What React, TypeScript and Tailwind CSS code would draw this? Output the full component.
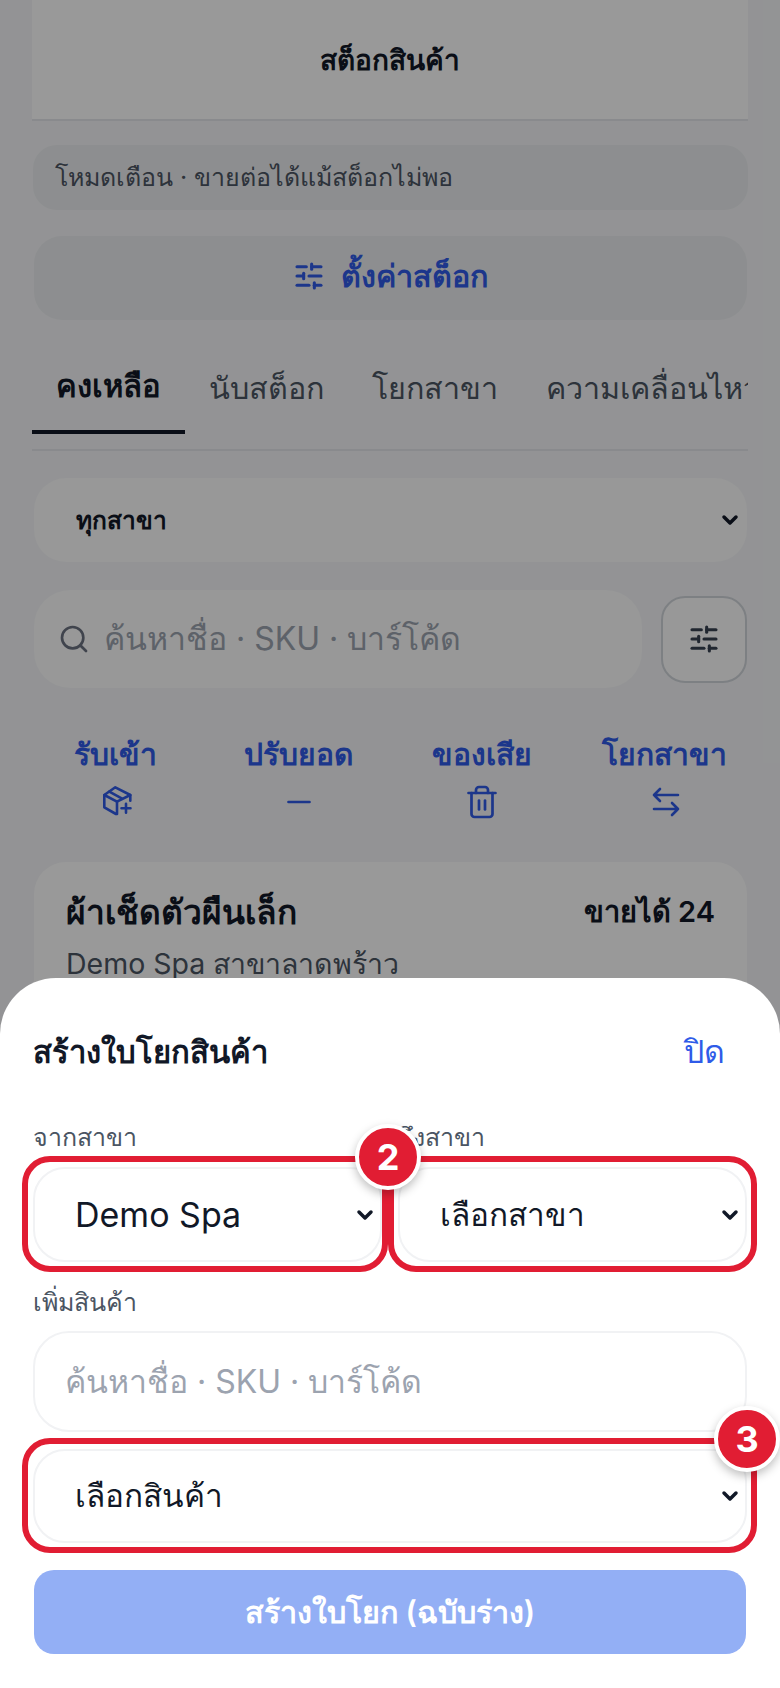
import React from 'react';
import { ChevronDown, Minus, Search, SlidersHorizontal, Trash2 } from 'lucide-react';

const TABS = ['คงเหลือ', 'นับสต็อก', 'โยกสาขา', 'ความเคลื่อนไหว'];

const BoxPlusIcon: React.FC = () => (
  <svg width="36" height="36" viewBox="0 0 36 36" fill="none" stroke="currentColor" strokeWidth="2.6" strokeLinecap="round" strokeLinejoin="round">
    <path d="M32.3 16.7V11L17.3 3.3 6.3 11v12.3L18 30" />
    <path d="M6.3 11 19 17.7 32.3 11" />
    <path d="M19 17.7V30" />
    <path d="M11.3 7.7 23.7 14.3" />
    <path d="M28 19.8v9M23.5 24.3h9" />
  </svg>
);

const SwapIcon: React.FC = () => (
  <svg width="36" height="36" viewBox="0 0 36 36" fill="none" stroke="currentColor" strokeWidth="2.6" strokeLinecap="round" strokeLinejoin="round">
    <path d="M31 11H7M13 5l-6 6 6 6" />
    <path d="M7 25h24M25 19l6 6-6 6" />
  </svg>
);

const ACTIONS = [
  { label: 'รับเข้า', icon: <BoxPlusIcon /> },
  { label: 'ปรับยอด', icon: <Minus className="w-9 h-9" strokeWidth={1.8} /> },
  { label: 'ของเสีย', icon: <Trash2 className="w-9 h-9" strokeWidth={1.8} /> },
  { label: 'โยกสาขา', icon: <SwapIcon /> },
];

const NativeSelect: React.FC<{ label: string; className?: string; textClass?: string }> = ({ label, className = '', textClass = 'text-[31.5px]' }) => (
  <div className={`relative flex items-center rounded-[32px] border-2 ${className}`}>
    <span className={`pl-[40px] ${textClass}`}>{label}</span>
    <ChevronDown className="absolute right-[3px] w-6 h-6 text-[#111827]" strokeWidth={3.5} />
  </div>
);

const Highlight: React.FC<{ className?: string }> = ({ className = '' }) => (
  <div className={`absolute rounded-[28px] border-[6px] border-[#e11d33] pointer-events-none ${className}`} />
);

const StepBadge: React.FC<{ n: number; className?: string }> = ({ n, className = '' }) => (
  <div className={`absolute w-[66px] h-[66px] rounded-full bg-[#e11d33] border-[4px] border-white shadow-[0_4px_10px_rgba(0,0,0,0.25)] flex items-center justify-center text-white text-[36px] font-bold ${className}`}>
    {n}
  </div>
);

export default function App() {
  return (
    <div className="relative w-[780px] h-[1688px] overflow-hidden bg-[#f5f6f8] text-[#111827] font-['Inter','Noto_Sans',sans-serif]">
      {/* page behind the sheet */}
      <div className="pl-[33px] pr-[32px] flex flex-col">
        <div className="-ml-px h-[121px] bg-white border-b-2 border-[#e5e7eb] flex items-center justify-center">
          <h1 className="text-[28px] font-semibold">สต็อกสินค้า</h1>
        </div>

        <div className="mt-6 h-[65px] rounded-[24px] bg-[#ebedf0] flex items-center px-[22px] text-[25px] text-[#4b5563]">
          โหมดเตือน · ขายต่อได้แม้สต็อกไม่พอ
        </div>

        <button className="mx-px mt-[26px] h-[84px] pb-1 rounded-[28px] bg-[#ebedf0] flex items-center justify-center gap-4 text-[#2f5be8] text-[30.5px] font-semibold">
          <SlidersHorizontal className="w-8 h-8" strokeWidth={2.3} />
          ตั้งค่าสต็อก
        </button>

        <div className="-ml-px mt-8 h-[99px] flex border-b-2 border-[#e5e7eb] overflow-hidden">
          {TABS.map((tab, i) => (
            <div key={tab} className={`relative h-[82px] shrink-0 px-6 pb-[10px] flex items-center whitespace-nowrap ${i === 0 ? 'text-[31px] font-semibold text-[#111827] border-b-4 border-[#111827]' : 'text-[30.5px] font-medium text-[#4b5563]'}`}>
              {tab}
            </div>
          ))}
        </div>

        <NativeSelect label="ทุกสาขา" textClass="text-[24.5px] font-semibold" className="mx-px mt-[27px] h-[84px] bg-white/75 border-transparent" />

        <div className="ml-px mt-7 flex items-center gap-[19px]">
          <div className="h-[98px] w-[608px] rounded-[36px] bg-white/75 flex items-center gap-[14px] px-6 text-[#6b7280]">
            <Search className="w-8 h-8 shrink-0" strokeWidth={2} />
            <span className="text-[32px] text-[#9ca3af]">ค้นหาชื่อ · SKU · บาร์โค้ด</span>
          </div>
          <div className="w-[86px] h-[87px] rounded-[24px] bg-white/75 border-2 border-[#d1d5db] flex items-center justify-center text-[#374151]">
            <SlidersHorizontal className="w-8 h-8" strokeWidth={2.3} />
          </div>
        </div>

        <div className="mt-[44px] -ml-[9px] -mr-[8px] grid grid-cols-4 text-[#2f5be8]">
          {ACTIONS.map((a) => (
            <div key={a.label} className="flex flex-col items-center gap-[8px]">
              <span className="text-[30px] font-semibold leading-[44px]">{a.label}</span>
              {a.icon}
            </div>
          ))}
        </div>

        <div className="mx-px mt-[42px] h-[200px] rounded-[32px] bg-white px-8 pt-[25px]">
          <div className="flex items-center justify-between">
            <span className="text-[33.5px] font-bold">ผ้าเช็ดตัวผืนเล็ก</span>
            <span className="text-[29px] font-semibold">ขายได้ 24</span>
          </div>
          <div className="mt-[6px] text-[28.5px] text-[#4b5563]">Demo Spa สาขาลาดพร้าว</div>
        </div>
      </div>

      {/* dim overlay */}
      <div className="absolute inset-0 bg-black/40" />

      {/* bottom sheet */}
      <div className="absolute left-0 right-0 bottom-0 h-[710px] rounded-t-[56px] bg-white px-[33px] pt-[50px]">
        <div className="flex items-center justify-between h-12">
          <h2 className="text-[31px] font-semibold">สร้างใบโยกสินค้า</h2>
          <button className="mr-[22px] text-[32px] font-medium text-[#2f5be8]">ปิด</button>
        </div>

        <div className="mt-[45px] grid grid-cols-2 gap-x-[16px]">
          <div>
            <div className="text-[25px] leading-8 text-[#4b5563]">จากสาขา</div>
            <NativeSelect label="Demo Spa" textClass="text-[34px]" className="mt-[14px] h-[95px] border-[#f1f2f4] bg-white" />
          </div>
          <div>
            <div className="text-[25px] leading-8 text-[#4b5563]">ถึงสาขา</div>
            <NativeSelect label="เลือกสาขา" className="mt-[14px] h-[95px] border-[#f1f2f4] bg-white" />
          </div>
        </div>

        <div className="mt-[24px] text-[25px] leading-8 text-[#4b5563]">เพิ่มสินค้า</div>
        <div className="mt-[13px] h-[101px] rounded-[36px] border-2 border-[#f1f2f4] flex items-center px-[30px] text-[32px] text-[#9ca3af]">
          ค้นหาชื่อ · SKU · บาร์โค้ด
        </div>
        <NativeSelect label="เลือกสินค้า" className="mt-[17px] h-[94px] border-[#f1f2f4] bg-white" />
        <button className="mx-px mt-[27px] w-[712px] h-[84px] rounded-[20px] bg-[#93aff5] text-white text-[30.5px] font-semibold">
          สร้างใบโยก (ฉบับร่าง)
        </button>
      </div>

      {/* tutorial highlights */}
      <Highlight className="left-[22px] top-[1156px] w-[366px] h-[116px]" />
      <Highlight className="left-[388px] top-[1156px] w-[369px] h-[116px]" />
      <Highlight className="left-[22px] top-[1438px] w-[735px] h-[115px]" />
      <StepBadge n={2} className="left-[355px] top-[1124px]" />
      <StepBadge n={3} className="left-[714px] top-[1406px]" />
    </div>
  );
}
